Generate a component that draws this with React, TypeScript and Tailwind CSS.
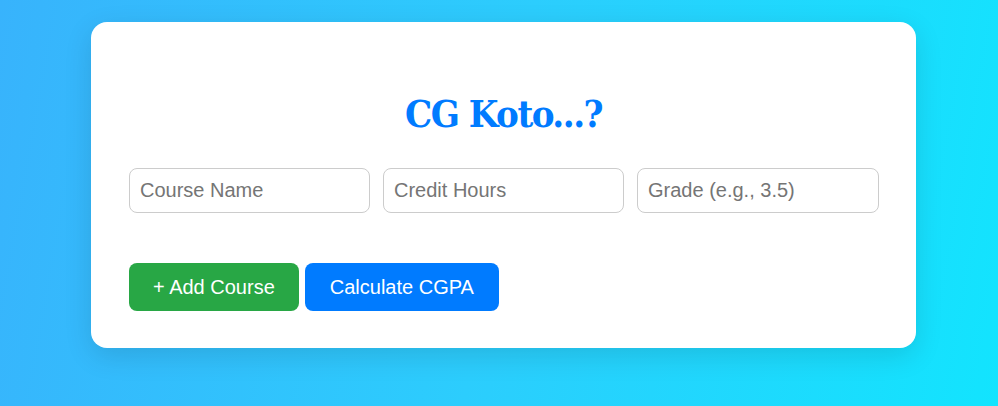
export default function App() {
  return (
    <div className="min-h-[406px] w-full bg-[linear-gradient(100deg,#38b3fc_0%,#2ccdfd_50%,#12e4fe_100%)] pl-[91px] pt-[22px] font-['Liberation_Sans',Arial,sans-serif]">
      <div className="w-[825px] rounded-[16px] bg-white px-[38px] pb-[37px] pt-[38px] shadow-[0_8px_28px_rgba(0,0,0,0.12)]">
        <div className="flex h-[108px] items-center justify-center">
          <h1 className="font-['DejaVu_Serif_Condensed','DejaVu_Serif',serif] text-[38px] font-semibold leading-none tracking-[-1.5px] text-[#007bff]">CG Koto...?</h1>
        </div>

        <div className="flex gap-[13px]">
          <input
            placeholder="Course Name"
            className="h-[45px] w-[241px] rounded-[8px] border border-[#cccccc] px-[10px] text-[20px] text-[#333] outline-none placeholder:text-[#757575]"
          />
          <input
            placeholder="Credit Hours"
            className="h-[45px] w-[241px] rounded-[8px] border border-[#cccccc] px-[10px] text-[20px] text-[#333] outline-none placeholder:text-[#757575]"
          />
          <input
            placeholder="Grade (e.g., 3.5)"
            className="h-[45px] w-[242px] rounded-[8px] border border-[#cccccc] px-[10px] text-[20px] text-[#333] outline-none placeholder:text-[#757575]"
          />
        </div>

        <div className="mt-[50px] flex gap-[6px]">
          <button className="h-[48px] rounded-[8px] bg-[#28a745] px-6 text-[20px] text-white">+ Add Course</button>
          <button className="h-[48px] rounded-[8px] bg-[#007bff] px-[25px] text-[20px] text-white">Calculate CGPA</button>
        </div>
      </div>
    </div>
  );
}
